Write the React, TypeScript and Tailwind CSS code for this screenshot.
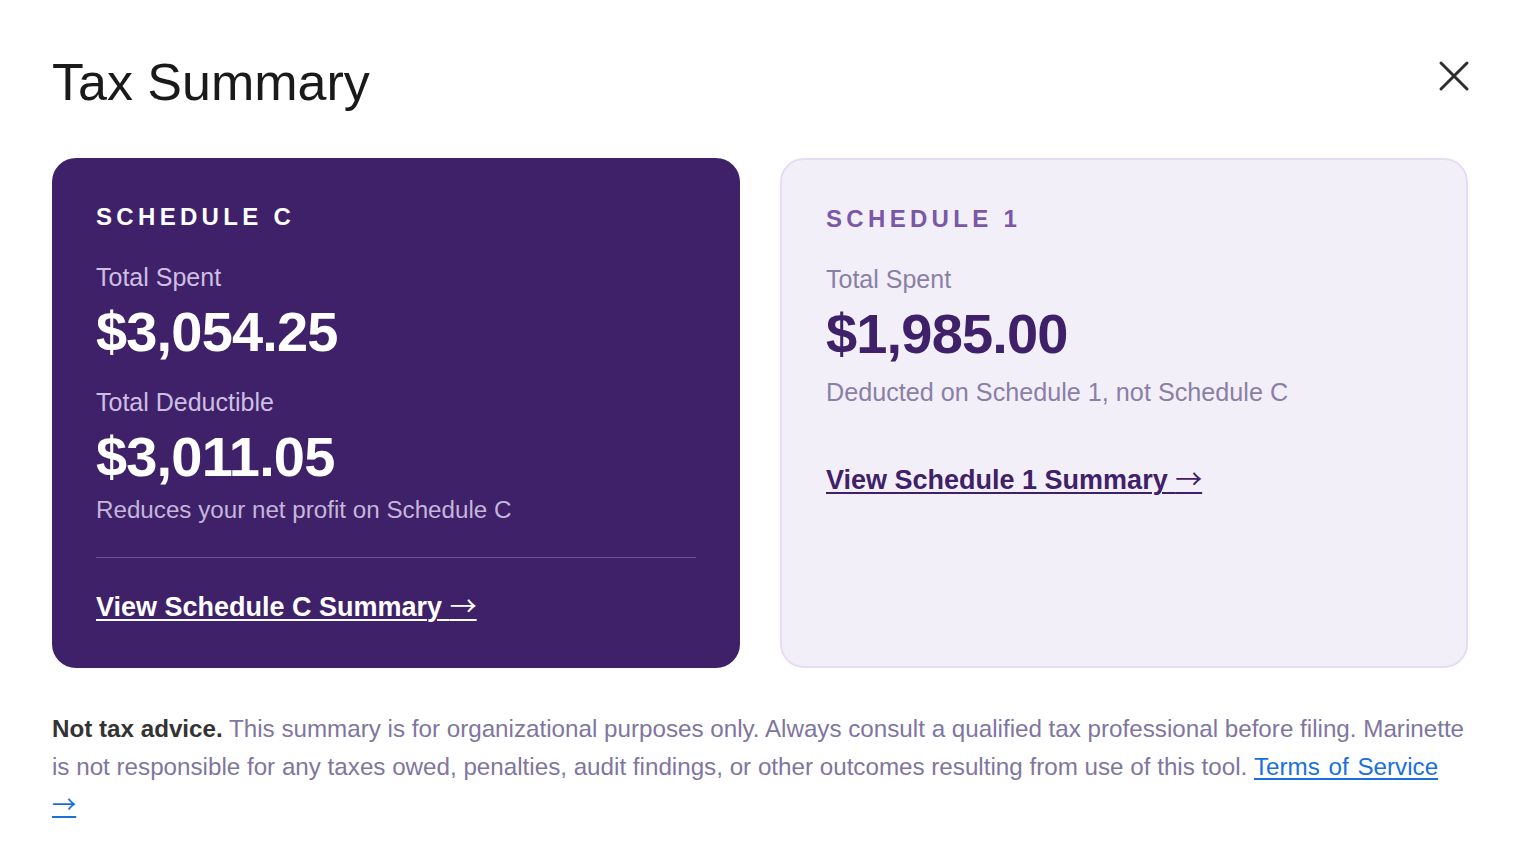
import React from 'react';

const font = { fontFamily: '"Liberation Sans", Arial, Helvetica, sans-serif' };

// Thin wide arrow used after link labels
function Arrow() {
  return (
    <span className="font-normal leading-none" style={{ fontFamily: '"Noto Sans CJK JP", "DejaVu Sans", sans-serif' }}>
      →
    </span>
  );
}

function CloseIcon() {
  return (
    <svg width="32" height="32" viewBox="0 0 32 32" fill="none" stroke="#2e2e2e" strokeWidth="3" strokeLinecap="round">
      <line x1="3" y1="3" x2="29" y2="29" />
      <line x1="29" y1="3" x2="3" y2="29" />
    </svg>
  );
}

export default function App() {
  return (
    <div className="min-h-[861px] bg-white px-[52px] pt-[56px]" style={font}>
      {/* Header */}
      <div className="flex items-start justify-between">
        <h1 className="text-[52px] leading-none text-[#1a1a1a]">Tax Summary</h1>
        <button className="mt-[4px] -mr-[2px] text-[#2e2e2e]" aria-label="Close">
          <CloseIcon />
        </button>
      </div>

      <div className="mt-[50px] grid grid-cols-2 gap-[40px]">
        {/* Schedule C card */}
        <div className="rounded-[24px] bg-[#3f2169] px-[44px] pt-[44px] pb-[45px]">
          <div className="text-[24px] leading-[30px] font-bold tracking-[0.18em] text-white">SCHEDULE C</div>
          <div className="mt-[30px] text-[25px] leading-[30px] text-[#cdbfe2]">Total Spent</div>
          <div className="mt-[12px] text-[56px] leading-none font-bold tracking-[-0.015em] text-white">$3,054.25</div>
          <div className="mt-[27px] text-[25px] leading-[30px] text-[#cdbfe2]">Total Deductible</div>
          <div className="mt-[12px] text-[56px] leading-none font-bold tracking-[-0.015em] text-white">$3,011.05</div>
          <div className="mt-[10px] text-[24.2px] leading-[30px] text-[#c4b6dc]">Reduces your net profit on Schedule C</div>
          <div className="mt-[32px] h-px bg-[#6c5592]" />
          <a href="#" className="mt-[33px] block text-[27px] leading-[32px] font-bold text-white underline underline-offset-[3px] decoration-2">
            View Schedule C Summary <Arrow />
          </a>
        </div>

        {/* Schedule 1 card */}
        <div className="rounded-[24px] border-2 border-[#e6ddf4] bg-[#f3eff9] px-[44px] pt-[44px] pb-[44px]">
          <div className="text-[24px] leading-[30px] font-bold tracking-[0.18em] text-[#7a58a8]">SCHEDULE 1</div>
          <div className="mt-[30px] text-[25px] leading-[30px] text-[#8a80a6]">Total Spent</div>
          <div className="mt-[12px] text-[56px] leading-none font-bold tracking-[-0.015em] text-[#3f2169]">$1,985.00</div>
          <div className="mt-[15px] text-[25.2px] leading-[30px] text-[#8a80a6]">Deducted on Schedule 1, not Schedule C</div>
          <a href="#" className="mt-[57px] inline-block text-[27px] leading-[32px] font-bold text-[#3f2169] underline underline-offset-[3px] decoration-2">
            View Schedule 1 Summary <Arrow />
          </a>
        </div>
      </div>

      {/* Disclaimer */}
      <p className="mt-[42px] text-[24.2px] leading-[38px] text-[#7f76a0]">
        <span className="font-bold text-[#333333]">Not tax advice.</span> This summary is for organizational purposes
        only. Always consult a qualified tax professional before filing. Marinette is not responsible for any taxes
        owed, penalties, audit findings, or other outcomes resulting from use of this tool.{' '}
        <a href="#" className="text-[#1a6fe0] underline underline-offset-[3px] [word-spacing:2px]">
          Terms of Service <Arrow />
        </a>
      </p>
    </div>
  );
}
